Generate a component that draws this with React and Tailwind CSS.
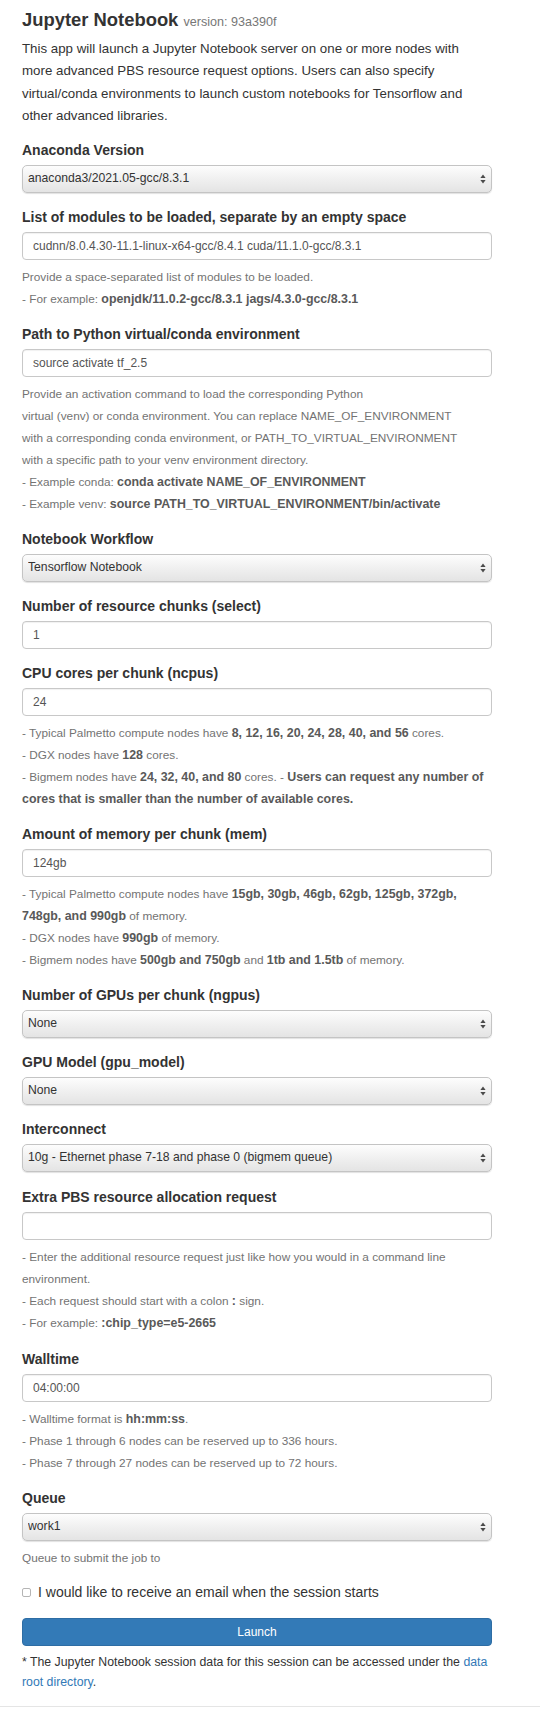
const Label = ({ children }) => (
  <label className="block text-[14px] leading-[20px] font-bold text-[#333] mb-[5px]">{children}</label>
);

const TextInput = ({ value }) => (
  <input
    type="text"
    defaultValue={value}
    className="block w-full h-[28px] px-[10px] text-[12px] text-[#555] bg-white border border-[#c8c8c8] rounded-[4px] shadow-[inset_0_1px_1px_rgba(0,0,0,0.06)] outline-none"
  />
);

const SelectBox = ({ value }) => (
  <div className="relative h-[28px]">
    <select
      defaultValue={value}
      className="block w-full h-[28px] pl-[5px] pr-6 text-[12.2px] text-[#333] appearance-none border border-[#c4c4c4] rounded-[5px] bg-gradient-to-b from-[#fdfdfd] via-[#f0f0f0] to-[#e4e4e4] shadow-[0_1px_1px_rgba(0,0,0,0.12)] outline-none"
    >
      <option value={value}>{value}</option>
    </select>
    {/* native-style up/down arrows */}
    <svg className="absolute right-[6px] top-[9px] pointer-events-none" width="6" height="10" viewBox="0 0 6 10">
      <path d="M3 0.5 L5.6 4 L0.4 4 Z" fill="#4a4a4a" />
      <path d="M3 9.5 L5.6 6 L0.4 6 Z" fill="#4a4a4a" />
    </svg>
  </div>
);

const Help = ({ children }) => (
  <div className="mt-[6px] text-[11.8px] leading-[22px] text-[#737373]">{children}</div>
);

const B = ({ children }) => <b className="font-bold text-[12.4px] text-[#595959]">{children}</b>;

const Group = ({ children, extra = '' }) => <div className={`mb-[14px] ${extra}`}>{children}</div>;

export default function App() {
  return (
    <div className="w-[540px] bg-white font-['Liberation_Sans',Arial,sans-serif] text-[#333]">
      <div className="pl-[22px] pr-[48px] pt-[6px]">
        <h3 className="text-[18.4px] leading-[27px] font-bold text-[#333]">
          Jupyter Notebook <small className="text-[12.6px] font-normal text-[#777]">version: 93a390f</small>
        </h3>
        <p className="mt-[2px] mb-[12px] text-[13.3px] leading-[22.4px] text-[#333]">
          This app will launch a Jupyter Notebook server on one or more nodes with more advanced PBS resource
          request options. Users can also specify virtual/conda environments to launch custom notebooks for
          Tensorflow and other advanced libraries.
        </p>

        <Group>
          <Label>Anaconda Version</Label>
          <SelectBox value="anaconda3/2021.05-gcc/8.3.1" />
        </Group>

        <Group>
          <Label>List of modules to be loaded, separate by an empty space</Label>
          <TextInput value="cudnn/8.0.4.30-11.1-linux-x64-gcc/8.4.1 cuda/11.1.0-gcc/8.3.1" />
          <Help>
            Provide a space-separated list of modules to be loaded.
            <br />- For example: <B>openjdk/11.0.2-gcc/8.3.1 jags/4.3.0-gcc/8.3.1</B>
          </Help>
        </Group>

        <Group>
          <Label>Path to Python virtual/conda environment</Label>
          <TextInput value="source activate tf_2.5" />
          <Help>
            Provide an activation command to load the corresponding Python
            <br />
            virtual (venv) or conda environment. You can replace NAME_OF_ENVIRONMENT
            <br />
            with a corresponding conda environment, or PATH_TO_VIRTUAL_ENVIRONMENT
            <br />
            with a specific path to your venv environment directory.
            <br />- Example conda: <B>conda activate NAME_OF_ENVIRONMENT</B>
            <br />- Example venv: <B>source PATH_TO_VIRTUAL_ENVIRONMENT/bin/activate</B>
          </Help>
        </Group>

        <Group>
          <Label>Notebook Workflow</Label>
          <SelectBox value="Tensorflow Notebook" />
        </Group>

        <Group>
          <Label>Number of resource chunks (select)</Label>
          <TextInput value="1" />
        </Group>

        <Group>
          <Label>CPU cores per chunk (ncpus)</Label>
          <TextInput value="24" />
          <Help>
            - Typical Palmetto compute nodes have <B>8, 12, 16, 20, 24, 28, 40, and 56</B> cores.
            <br />- DGX nodes have <B>128</B> cores.
            <br />- Bigmem nodes have <B>24, 32, 40, and 80</B> cores. -{' '}
            <B>Users can request any number of cores that is smaller than the number of available cores.</B>
          </Help>
        </Group>

        <Group>
          <Label>Amount of memory per chunk (mem)</Label>
          <TextInput value="124gb" />
          <Help>
            - Typical Palmetto compute nodes have <B>15gb, 30gb, 46gb, 62gb, 125gb, 372gb, 748gb, and 990gb</B> of
            memory.
            <br />- DGX nodes have <B>990gb</B> of memory.
            <br />- Bigmem nodes have <B>500gb and 750gb</B> and <B>1tb and 1.5tb</B> of memory.
          </Help>
        </Group>

        <Group>
          <Label>Number of GPUs per chunk (ngpus)</Label>
          <SelectBox value="None" />
        </Group>

        <Group>
          <Label>GPU Model (gpu_model)</Label>
          <SelectBox value="None" />
        </Group>

        <Group extra="pb-[1px]">
          <Label>Interconnect</Label>
          <SelectBox value="10g - Ethernet phase 7-18 and phase 0 (bigmem queue)" />
        </Group>

        <Group>
          <Label>Extra PBS resource allocation request</Label>
          <TextInput value="" />
          <Help>
            - Enter the additional resource request just like how you would in a command line environment.
            <br />- Each request should start with a colon <B>:</B> sign.
            <br />- For example: <B>:chip_type=e5-2665</B>
          </Help>
        </Group>

        <Group extra="pt-[1px]">
          <Label>Walltime</Label>
          <TextInput value="04:00:00" />
          <Help>
            - Walltime format is <B>hh:mm:ss</B>.
            <br />- Phase 1 through 6 nodes can be reserved up to 336 hours.
            <br />- Phase 7 through 27 nodes can be reserved up to 72 hours.
          </Help>
        </Group>

        <Group>
          <Label>Queue</Label>
          <SelectBox value="work1" />
          <Help>Queue to submit the job to</Help>
        </Group>

        <label className="flex items-center gap-[7px] h-[20px] text-[14px] text-[#333]">
          <span className="w-[9px] h-[9px] border border-[#b5b5b5] rounded-[2px] bg-white shrink-0" />
          I would like to receive an email when the session starts
        </label>

        <button className="mt-[15px] w-full h-[28px] rounded-[4px] bg-[#337ab7] border border-[#2e6da4] text-white text-[12px]">
          Launch
        </button>

        <p className="mt-[6px] text-[12.3px] leading-[20px] text-[#333]">
          * The Jupyter Notebook session data for this session can be accessed under the{' '}
          <a className="text-[#337ab7]">data root directory</a>.
        </p>
      </div>
      <hr className="mt-[14px] border-0 border-t border-[#e5e5e5]" />
      <div className="h-[4px]" />
    </div>
  );
}
